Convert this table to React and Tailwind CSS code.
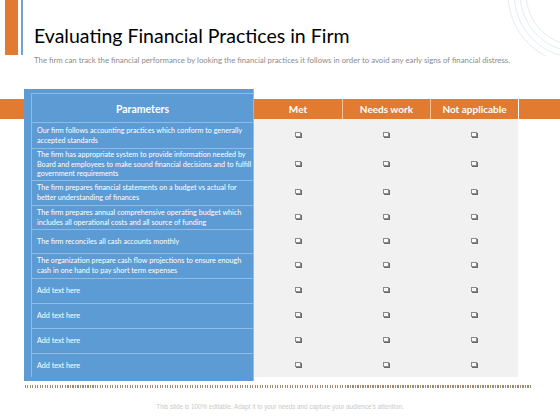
import React from 'react';

const TableSection = () => {
  const rows = [
    { text: 'Our firm follows accounting practices  which conform to generally accepted standards', h: 'h-[26px]' },
    { text: 'The firm has appropriate  system to provide information needed by Board and employees to make sound financial decisions and to fulfill government requirements', h: 'h-[32px]' },
    { text: 'The firm prepares  financial  statements  on a budget  vs actual  for better understanding  of finances', h: 'h-[25px]' },
    { text: 'The firm prepares  annual comprehensive operating budget which includes all operational costs and all source of funding', h: 'h-[24px]' },
    { text: 'The firm reconciles all cash accounts monthly', h: 'h-[24px]' },
    { text: 'The organization prepare cash flow projections to ensure enough cash in one hand to pay short term expenses', h: 'h-[25px]' },
    { text: 'Add text here', h: 'h-[25px]' },
    { text: 'Add text here', h: 'h-[25px]' },
    { text: 'Add text here', h: 'h-[25px]' },
    { text: 'Add text here', h: 'h-[25px]' },
  ];

  return (
    <div className="flex items-start mt-[24px]">
      {/* left orange band */}
      <div className="w-[24px] h-[20px] mt-[10px] bg-[#e27a30]" />

      {/* Parameters panel */}
      <div className="w-[230px] h-[292px] bg-[#5d9bd4] pt-[4px] pl-[7px] border-r border-[#8fbbe4]">
        <div className="border-l border-t border-[#8fbbe4] h-[284px]">
          <div className="h-[28px] pt-[4px] flex items-center justify-center text-white font-bold text-[10.5px]">
            Parameters
          </div>
          {rows.map((row, i) => (
            <div
              key={i}
              className={`${row.h} border-t border-[#8fbbe4] flex items-center pl-[5px] pr-[1px] text-white text-[7.2px] leading-[9.6px]`}
            >
              {row.text}
            </div>
          ))}
        </div>
      </div>

      {/* Met / Needs work / Not applicable */}
      <div className="w-[264px] mt-[10px]">
        <div className="h-[20px] grid grid-cols-3 bg-[#e27a30] text-white font-bold text-[10px]">
          <div className="flex items-center justify-center">Met</div>
          <div className="flex items-center justify-center border-l border-[#f3c19c]">Needs work</div>
          <div className="flex items-center justify-center border-l border-[#f3c19c]">Not applicable</div>
        </div>
        <div className="bg-[#f1f1f1] pt-[2px]">
          {rows.map((row, i) => (
            <div key={i} className={`${row.h} grid grid-cols-3`}>
              {[0, 1, 2].map((c) => (
                <div key={c} className="flex items-center justify-center">
                  <span className="w-[6px] h-[5px] border border-[#8a8a8a] bg-[#fafafa] shadow-[1px_1px_0_#6b6b6b]" />
                </div>
              ))}
            </div>
          ))}
        </div>
      </div>

      {/* right orange band */}
      <div className="flex-1 h-[20px] mt-[10px] ml-px bg-[#e27a30]" />
    </div>
  );
};

export default function App() {
  return (
    <div className="relative w-[560px] h-[420px] bg-white overflow-hidden font-['Lato','Liberation_Sans',sans-serif]">
      {/* faint arcs top right */}
      <svg className="absolute right-0 top-0" width="60" height="56" viewBox="0 0 60 56">
        {[38, 44, 50, 56].map((r) => (
          <circle key={r} cx="78" cy="-6" r={r + 14} fill="none" stroke="#dde6f0" strokeWidth="0.8" />
        ))}
      </svg>

      {/* header */}
      <div className="flex items-start">
        <div className="ml-[5px] w-[13px] h-[55px] bg-[#e27a30]" />
        <div className="ml-[3px] w-[2px] h-[55px] bg-[#6fa3d6]" />
        <div className="ml-[11px] pt-[25px]">
          <h1 className="text-[19.5px] leading-[22px] text-black">
            Evaluating Financial Practices in Firm
          </h1>
          <p className="mt-[9px] text-[7.8px] leading-[9px] text-[#8c8c8c] whitespace-nowrap">
            The firm can track the financial performance  by looking the financial practices it follows  in order to avoid  any early signs of financial distress.
          </p>
        </div>
      </div>

      <TableSection />

      {/* dotted divider */}
      <div className="ml-[25px] mt-[4px] w-[506px] h-[3px] bg-[repeating-linear-gradient(90deg,#9d8b72_0px,#9d8b72_1px,transparent_1px,transparent_2.5px)]" />

      <p className="mt-[14px] text-center text-[6.3px] text-[#c9c9c9] font-['Liberation_Sans',sans-serif]">
        This slide is 100% editable. Adapt it to your needs and capture your audience's attention.
      </p>
    </div>
  );
}
